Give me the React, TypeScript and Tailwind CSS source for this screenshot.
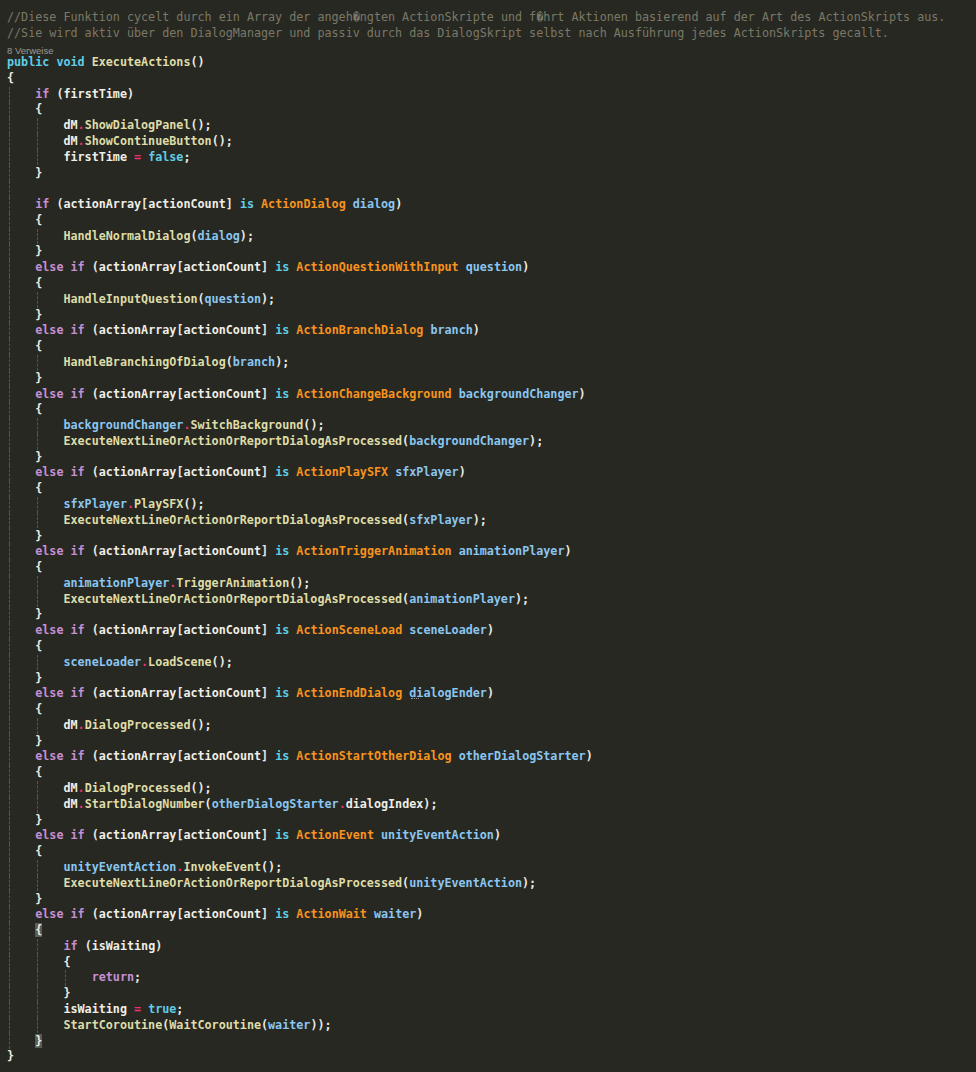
import React from "react";

type Line = [number, string, boolean?];

const PURPLE = new Set(["if", "else", "return"]);
const CYAN = new Set(["public", "void", "is", "false", "true"]);
const PARAMS = new Set([
  "dialog",
  "question",
  "branch",
  "backgroundChanger",
  "sfxPlayer",
  "animationPlayer",
  "sceneLoader",
  "dialogEnder",
  "otherDialogStarter",
  "unityEventAction",
  "waiter",
]);

const cls = {
  purple: "text-[#c58fd3]",
  cyan: "text-[#5fcde6]",
  type: "text-[#f7931e]",
  param: "text-[#8ac6f0]",
  fn: "text-[#dfdca8]",
  field: "text-[#efeee6]",
  op: "text-[#f0306e]",
  punct: "text-[#ecebe2]",
};

const branch = (type: string, name: string): Line[] => [
  [1, `else if (actionArray[actionCount] is ${type} ${name})`],
  [1, "{"],
];

const code: Line[] = [
  [0, "public void ExecuteActions()"],
  [0, "{"],
  [1, "if (firstTime)"],
  [1, "{"],
  [2, "dM.ShowDialogPanel();"],
  [2, "dM.ShowContinueButton();"],
  [2, "firstTime = false;"],
  [1, "}"],
  [1, ""],
  [1, "if (actionArray[actionCount] is ActionDialog dialog)"],
  [1, "{"],
  [2, "HandleNormalDialog(dialog);"],
  [1, "}"],
  ...branch("ActionQuestionWithInput", "question"),
  [2, "HandleInputQuestion(question);"],
  [1, "}"],
  ...branch("ActionBranchDialog", "branch"),
  [2, "HandleBranchingOfDialog(branch);"],
  [1, "}"],
  ...branch("ActionChangeBackground", "backgroundChanger"),
  [2, "backgroundChanger.SwitchBackground();"],
  [2, "ExecuteNextLineOrActionOrReportDialogAsProcessed(backgroundChanger);"],
  [1, "}"],
  ...branch("ActionPlaySFX", "sfxPlayer"),
  [2, "sfxPlayer.PlaySFX();"],
  [2, "ExecuteNextLineOrActionOrReportDialogAsProcessed(sfxPlayer);"],
  [1, "}"],
  ...branch("ActionTriggerAnimation", "animationPlayer"),
  [2, "animationPlayer.TriggerAnimation();"],
  [2, "ExecuteNextLineOrActionOrReportDialogAsProcessed(animationPlayer);"],
  [1, "}"],
  ...branch("ActionSceneLoad", "sceneLoader"),
  [2, "sceneLoader.LoadScene();"],
  [1, "}"],
  ...branch("ActionEndDialog", "dialogEnder"),
  [2, "dM.DialogProcessed();"],
  [1, "}"],
  ...branch("ActionStartOtherDialog", "otherDialogStarter"),
  [2, "dM.DialogProcessed();"],
  [2, "dM.StartDialogNumber(otherDialogStarter.dialogIndex);"],
  [1, "}"],
  ...branch("ActionEvent", "unityEventAction"),
  [2, "unityEventAction.InvokeEvent();"],
  [2, "ExecuteNextLineOrActionOrReportDialogAsProcessed(unityEventAction);"],
  [1, "}"],
  [1, "else if (actionArray[actionCount] is ActionWait waiter)"],
  [1, "{", true],
  [2, "if (isWaiting)"],
  [2, "{"],
  [3, "return;"],
  [2, "}"],
  [2, "isWaiting = true;"],
  [2, "StartCoroutine(WaitCoroutine(waiter));"],
  [1, "}", true],
  [0, "}"],
];

function tokens(text: string, hl?: boolean) {
  const out: React.ReactNode[] = [];
  const re = /([A-Za-z_][A-Za-z0-9_]*)|(\s+)|(.)/g;
  let m: RegExpExecArray | null;
  let i = 0;
  while ((m = re.exec(text))) {
    const t = m[0];
    const next = text[re.lastIndex];
    let c = cls.punct;
    if (m[1]) {
      if (PURPLE.has(t)) c = cls.purple;
      else if (CYAN.has(t)) c = cls.cyan;
      else if (/^Action[A-Z]/.test(t)) c = cls.type;
      else if (PARAMS.has(t)) c = cls.param;
      else if (next === "(") c = cls.fn;
      else c = cls.field;
    } else if (t === "." || t === "=") {
      c = cls.op;
    }
    if (t === "dialogEnder") {
      // squiggle hint under the first letters
      out.push(
        <span key={i++} className={`relative ${c}`}>
          dialogEnder
          <span className="absolute left-[2px] top-[12px] w-[8px] border-b border-dotted border-[#9a9a9a]" />
        </span>
      );
    } else if (hl) {
      out.push(
        <span key={i++} className={`inline-block h-[14px] bg-[#5b5b57] leading-[14px] ${c}`}>
          {t}
        </span>
      );
    } else {
      out.push(
        <span key={i++} className={c}>
          {t}
        </span>
      );
    }
  }
  return out;
}

export default function App() {
  return (
    <div className="h-[1072px] w-full overflow-hidden bg-[#272822] pl-[7px] pt-[9px]">
      {/* Comment header */}
      <div className="font-['DejaVu_Sans_Mono',monospace] text-[11.73px] leading-[16px] text-[#7b7866] whitespace-pre">
        <div>
          //Diese Funktion cycelt durch ein Array der angeh{"\uFFFD"}ngten ActionSkripte und f{"\uFFFD"}hrt Aktionen basierend auf der Art des ActionSkripts aus.
        </div>
        <div>
          //Sie wird aktiv über den DialogManager und passiv durch das DialogSkript selbst nach Ausführung jedes ActionSkripts gecallt.
        </div>
      </div>

      {/* CodeLens */}
      <div className="flex h-[14px] items-end font-['Liberation_Sans',Arial,sans-serif] text-[9.5px] leading-none text-[#9b9b96]">
        8 Verweise
      </div>

      {/* Code */}
      <div className="font-['DejaVu_Sans_Mono',monospace] text-[11.73px] font-bold">
        {code.map(([indent, text, hl], idx) => (
          <div key={idx} className="flex h-[15.79px] items-center whitespace-pre">
            {Array.from({ length: indent }).map((_, g) => (
              <span key={g} className="flex h-full w-[4ch] shrink-0 pl-[2px]">
                <span className="h-full border-l border-dashed border-[#55554f]" />
              </span>
            ))}
            <span>{tokens(text, hl)}</span>
          </div>
        ))}
      </div>
    </div>
  );
}
